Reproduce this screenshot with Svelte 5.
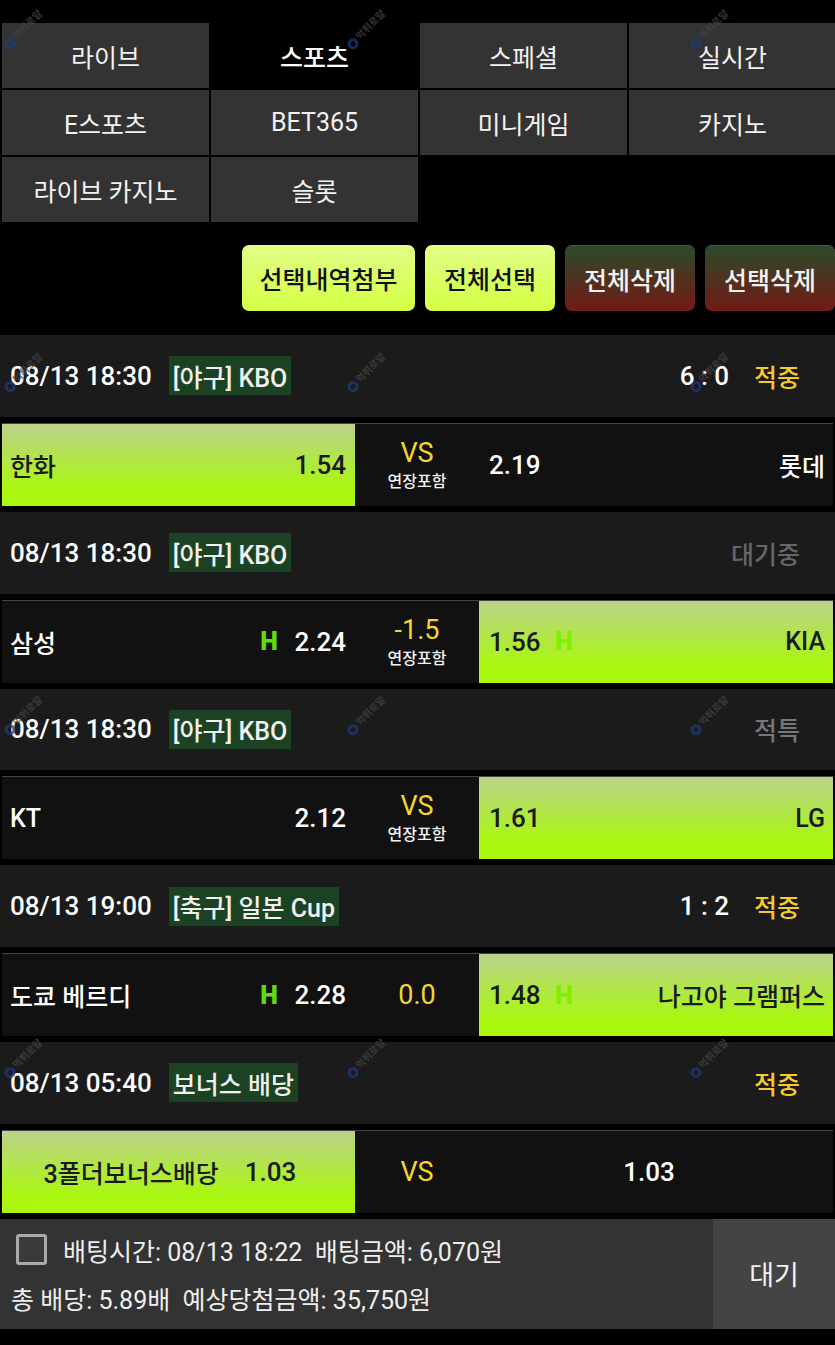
<script>
    const tabs = [
        { label: "라이브" },
        { label: "스포츠", active: true },
        { label: "스페셜" },
        { label: "실시간" },
        { label: "E스포츠" },
        { label: "BET365" },
        { label: "미니게임" },
        { label: "카지노" },
        { label: "라이브 카지노" },
        { label: "슬롯" }
    ]

    const actions = [
        { label: "선택내역첨부", cls: "lime wide" },
        { label: "전체선택", cls: "lime" },
        { label: "전체삭제", cls: "red" },
        { label: "선택삭제", cls: "red" }
    ]

    const bets = [
        {
            time: "08/13 18:30", league: "[야구] KBO", score: "6 : 0", status: "적중", statusCls: "hit",
            home: "한화", homeOdds: "1.54", mid: "VS", sub: "연장포함", awayOdds: "2.19", away: "롯데", picked: "home"
        },
        {
            time: "08/13 18:30", league: "[야구] KBO", status: "대기중", statusCls: "wait",
            home: "삼성", homeOdds: "2.24", mid: "-1.5", sub: "연장포함", awayOdds: "1.56", away: "KIA", picked: "away", handicap: true
        },
        {
            time: "08/13 18:30", league: "[야구] KBO", status: "적특", statusCls: "void",
            home: "KT", homeOdds: "2.12", mid: "VS", sub: "연장포함", awayOdds: "1.61", away: "LG", picked: "away"
        },
        {
            time: "08/13 19:00", league: "[축구] 일본 Cup", score: "1 : 2", status: "적중", statusCls: "hit",
            home: "도쿄 베르디", homeOdds: "2.28", mid: "0.0", awayOdds: "1.48", away: "나고야 그램퍼스", picked: "away", handicap: true
        },
        {
            time: "08/13 05:40", league: "보너스 배당", status: "적중", statusCls: "hit", bonus: true,
            home: "3폴더보너스배당", homeOdds: "1.03", mid: "VS", awayOdds: "1.03", picked: "home"
        }
    ]

    const marks = []
    for (let row = 0; row < 4; row++) {
        for (let col = 0; col < 3; col++) marks.push({ x: 5 + col * 343, y: 5 + row * 343 })
    }
</script>

<div class="page">
    <nav class="tabs">
        {#each tabs as tab}
            <div class="tab" class:active={tab.active}>{tab.label}</div>
        {/each}
    </nav>

    <div class="actions">
        {#each actions as action}
            <div class="action {action.cls}">{action.label}</div>
        {/each}
    </div>

    {#each bets as bet}
        <section class="bet">
            <header class="head">
                <span class="time">{bet.time}</span>
                <span class="league">{bet.league}</span>
                <span class="score">{bet.score ?? ""}</span>
                <span class="status {bet.statusCls}">{bet.status}</span>
            </header>

            <div class="odds">
                {#if bet.bonus}
                    <div class="side left bonus" class:picked={bet.picked === "home"}>
                        <span>{bet.home}</span><span class="num">{bet.homeOdds}</span>
                    </div>
                {:else}
                    <div class="side left" class:picked={bet.picked === "home"}>
                        <span class="team">{bet.home}</span>
                        {#if bet.handicap}<span class="h">H</span>{/if}
                        <span class="num">{bet.homeOdds}</span>
                    </div>
                {/if}

                <div class="mid">
                    <span class="line">{bet.mid}</span>
                    {#if bet.sub}<span class="sub">{bet.sub}</span>{/if}
                </div>

                {#if bet.bonus}
                    <div class="side right bonus-right"><span class="num">{bet.awayOdds}</span></div>
                {:else}
                    <div class="side right" class:picked={bet.picked === "away"}>
                        <span class="num">{bet.awayOdds}</span>
                        {#if bet.handicap}<span class="h">H</span>{/if}
                        <span class="team">{bet.away}</span>
                    </div>
                {/if}
            </div>
        </section>
    {/each}

    <footer class="summary">
        <div class="info">
            <div class="info-line">
                <span class="check"></span>
                <span>배팅시간: 08/13 18:22&nbsp; 배팅금액: 6,070원</span>
            </div>
            <div class="info-line second">총 배당: 5.89배&nbsp; 예상당첨금액: 35,750원</div>
        </div>
        <div class="state">대기</div>
    </footer>

    <div class="marks">
        {#each marks as m}
            <div class="mark" style="left: {m.x}px; top: {m.y}px">
                <span class="ring"></span><span class="mark-text">먹튀로얄</span>
            </div>
        {/each}
    </div>
</div>

<style>
:global(body) {
    background: #000;
}

.page {
    position: relative;
    width: 835px;
    height: 1345px;
    overflow: hidden;
    background: #000;
    color: #fff;
    font-family: Roboto, "Noto Sans CJK KR", sans-serif;
    font-size: 25px;
    font-weight: 500;
}

.tabs {
    display: grid;
    grid-template-columns: 207px 207px 207px 207px;
    grid-auto-rows: 65px;
    column-gap: 2px;
    row-gap: 2px;
    padding: 23px 0 0 2px;
}

.tab {
    display: flex;
    align-items: center;
    justify-content: center;
    background: #333;
    color: #f2f2f2;
    font-weight: 400;
}

.tab.active {
    background: #000;
    color: #fff;
    font-weight: 500;
}

.actions {
    display: flex;
    justify-content: flex-end;
    gap: 10px;
    margin-top: 23px;
}

.action {
    display: flex;
    align-items: center;
    justify-content: center;
    width: 130px;
    height: 66px;
    border-radius: 7px;
    box-sizing: border-box;
}

.action.wide {
    width: 173px;
}

.lime {
    background: linear-gradient(#e2fd86, #d3ff42);
    color: #111;
}

.red {
    background: linear-gradient(#2b4a2a, #731a15);
    border-top: 1px solid #44604a;
    color: #f2f2f2;
}

.bet {
    display: flex;
    flex-direction: column;
}

.actions + .bet {
    margin-top: 24px;
}

.head {
    display: flex;
    align-items: center;
    height: 81.75px;
    padding: 0 35px 0 10px;
    box-sizing: border-box;
    background: #1b1b1b;
}

.time {
    font-size: 26px;
    margin-right: 17px;
}

.league {
    display: flex;
    align-items: center;
    height: 39px;
    padding: 0 4px;
    background: #1c4224;
    color: #f0f0f0;
}

.score {
    margin-left: auto;
    margin-right: 25px;
    font-size: 26px;
}

.status.hit {
    color: #f5cb2c;
}

.status.wait {
    color: #666;
}

.status.void {
    color: #777;
}

.odds {
    display: grid;
    grid-template-columns: 353px 124px 354px;
    height: 83px;
    margin: 6px 2px;
    box-sizing: border-box;
    background: #111;
    border-top: 1px solid #444;
}

.bet:last-of-type .odds {
    margin-bottom: 6px;
}

.side {
    display: flex;
    align-items: center;
    padding: 0 8px;
}

.left .team {
    margin-right: auto;
}

.left .h {
    margin-right: 16px;
}

.left .num {
    margin-right: 1px;
}

.right {
    padding: 0 8px 0 10px;
}

.right .team {
    margin-left: auto;
}

.right .h {
    margin-left: 14px;
}

.picked {
    background: linear-gradient(#bcd28c, #a9f70e 80%);
    color: #1a1a1a;
}

.bonus {
    justify-content: center;
    gap: 26px;
    padding-right: 24px;
}

.bonus-right {
    justify-content: center;
    padding: 0 14px 0 0;
}

.num {
    font-size: 26px;
}

.h {
    color: #5fdc10;
    font-size: 25px;
    font-weight: 900;
    width: 19px;
    text-align: center;
}

.picked .h {
    color: #7cf000;
}

.mid {
    display: flex;
    flex-direction: column;
    align-items: center;
    justify-content: center;
    gap: 2px;
}

.line {
    color: #f5d62c;
    font-size: 27px;
    font-weight: 400;
    line-height: 32px;
}

.sub {
    font-size: 16px;
    line-height: 22px;
    color: #f2f2f2;
}

.summary {
    display: flex;
    height: 110px;
    background: #333;
    color: #eee;
    font-weight: 400;
}

.info {
    flex: 1;
    display: flex;
    flex-direction: column;
    justify-content: center;
    gap: 15px;
    padding-left: 11px;
}

.info-line {
    display: flex;
    align-items: center;
    height: 33px;
}

.check {
    width: 31px;
    height: 31px;
    box-sizing: border-box;
    margin: 0 16px 0 5px;
    border: 3px solid #aaa;
    border-radius: 3px;
    background: #3a3a3a;
}

.state {
    display: flex;
    align-items: center;
    justify-content: center;
    width: 122px;
    background: #444;
    font-size: 27px;
    color: #f2f2f2;
}

.marks {
    position: absolute;
    inset: 0;
    pointer-events: none;
}

.mark {
    position: absolute;
    display: flex;
    align-items: center;
    gap: 2px;
    width: 60px;
    height: 14px;
    transform: translate(-8px, 14px) rotate(-45deg);
    opacity: 0.75;
}

.ring {
    flex: none;
    width: 11px;
    height: 11px;
    box-sizing: border-box;
    border: 3px solid #1f3a7a;
    border-radius: 50%;
}

.mark-text {
    font-size: 10px;
    font-weight: 700;
    line-height: 12px;
    color: #444;
    white-space: nowrap;
}
</style>
